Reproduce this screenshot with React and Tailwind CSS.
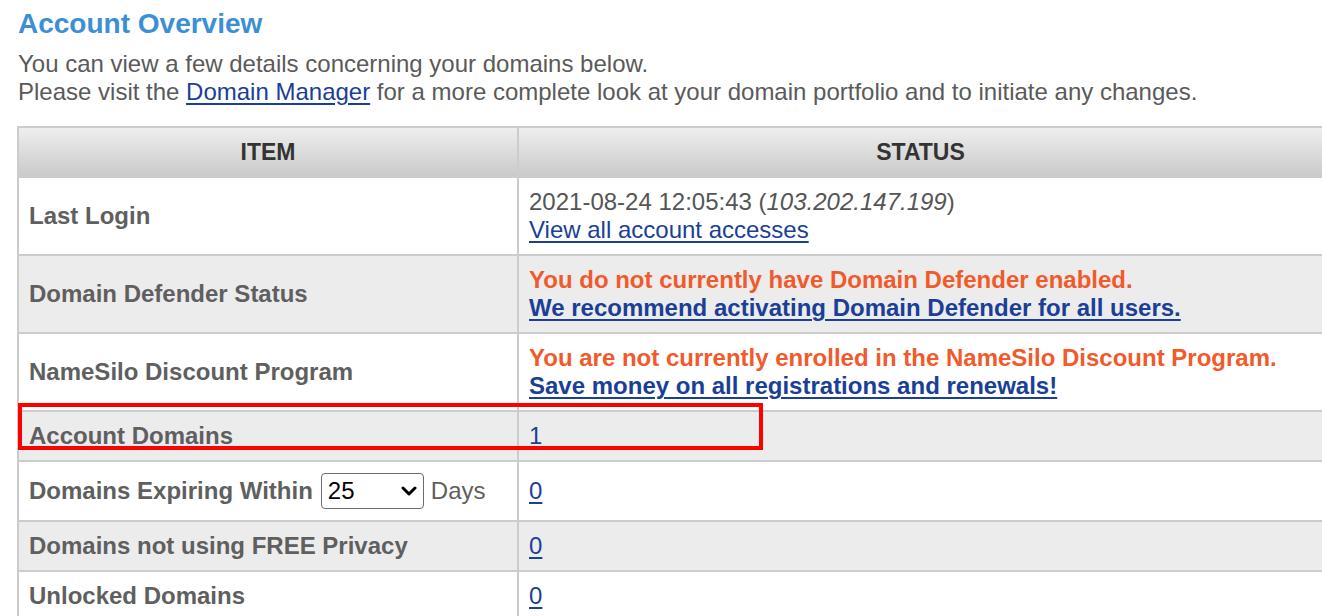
import React from "react";

const F = { fontFamily: '"Liberation Sans", Arial, Helvetica, sans-serif' };

function Chevron() {
  return (
    <svg width="16" height="12" viewBox="0 0 16 12" className="ml-auto">
      <path d="M2 3 L8 9 L14 3" fill="none" stroke="#000" strokeWidth="3" strokeLinecap="round" strokeLinejoin="round" />
    </svg>
  );
}

const linkBold = "text-[#1b3f96] underline underline-offset-[3px] decoration-[2px]";
const link = "text-[#1b3f96] underline underline-offset-[3px]";

export default function App() {
  const label = "pl-[10px] pr-[11px] py-[10px] border-2 border-[#cccccc] font-bold text-[#5f5f5f] text-[24px] leading-[28px] align-middle";
  const val = "pl-[10px] pr-[11px] py-[10px] border-2 border-[#cccccc] text-[24px] leading-[28px] align-middle";
  return (
    <div style={F} className="relative w-[1322px] h-[616px] overflow-hidden bg-white pl-[17px]">
      <h1 className="ml-[1px] text-[28px] leading-[32px] font-bold text-[#3b8fd4] pt-[8px]">Account Overview</h1>
      <div className="ml-[1px] mt-[10px] text-[24px] leading-[28px] text-[#5a5a5a]">
        <div>You can view a few details concerning your domains below.</div>
        <div>
          Please visit the <a className={link}>Domain Manager</a> for a more complete look at your domain portfolio and to initiate any changes.
        </div>
      </div>
      <table className="mt-[20px] w-[1307px] border-collapse">
        <thead>
          <tr className="bg-gradient-to-b from-[#efefef] to-[#c9c9c9]">
            <th className="w-[500px] h-[50px] border-2 border-[#cccccc] text-[23px] font-bold text-[#333333] text-center">ITEM</th>
            <th className="h-[50px] border-2 border-[#cccccc] text-[23px] font-bold text-[#333333] text-center">STATUS</th>
          </tr>
        </thead>
        <tbody>
          <tr className="bg-white">
            <td className={label + " py-[9px]"}>Last Login</td>
            <td className={val + " py-[9px] text-[#555555]"}>
              <div>2021-08-24 12:05:43 (<i>103.202.147.199</i>)</div>
              <div><a className={link}>View all account accesses</a></div>
            </td>
          </tr>
          <tr className="bg-[#ececec]">
            <td className={label}>Domain Defender Status</td>
            <td className={val + " font-bold"}>
              <div className="text-[#f15a2b]">You do not currently have Domain Defender enabled.</div>
              <div><a className={linkBold}>We recommend activating Domain Defender for all users.</a></div>
            </td>
          </tr>
          <tr className="bg-white">
            <td className={label}>NameSilo Discount Program</td>
            <td className={val + " font-bold"}>
              <div className="text-[#f15a2b]">You are not currently enrolled in the NameSilo Discount Program.</div>
              <div><a className={linkBold}>Save money on all registrations and renewals!</a></div>
            </td>
          </tr>
          <tr className="bg-[#ececec]">
            <td className={label}>Account Domains</td>
            <td className={val}><a className="text-[#1b3f96]">1</a></td>
          </tr>
          <tr className="bg-white">
            <td className={label + " py-[11px]"}>
              <div className="flex items-center">
                <span>Domains Expiring Within</span>
                <span className="ml-[8px] inline-flex items-center w-[103px] h-[36px] border border-[#6b6b6b] rounded-[4px] px-[6px] text-black font-normal text-[24px]">
                  25
                  <Chevron />
                </span>
                <span className="ml-[7px] font-normal">Days</span>
              </div>
            </td>
            <td className={val}><a className={link}>0</a></td>
          </tr>
          <tr className="bg-[#ececec]">
            <td className={label}>Domains not using FREE Privacy</td>
            <td className={val}><a className={link}>0</a></td>
          </tr>
          <tr className="bg-white">
            <td className={label}>Unlocked Domains</td>
            <td className={val}><a className={link}>0</a></td>
          </tr>
        </tbody>
      </table>
      <div className="absolute left-[18px] top-[403px] w-[745px] h-[47px] border-[4px] border-[#ff0000] pointer-events-none"></div>
    </div>
  );
}
